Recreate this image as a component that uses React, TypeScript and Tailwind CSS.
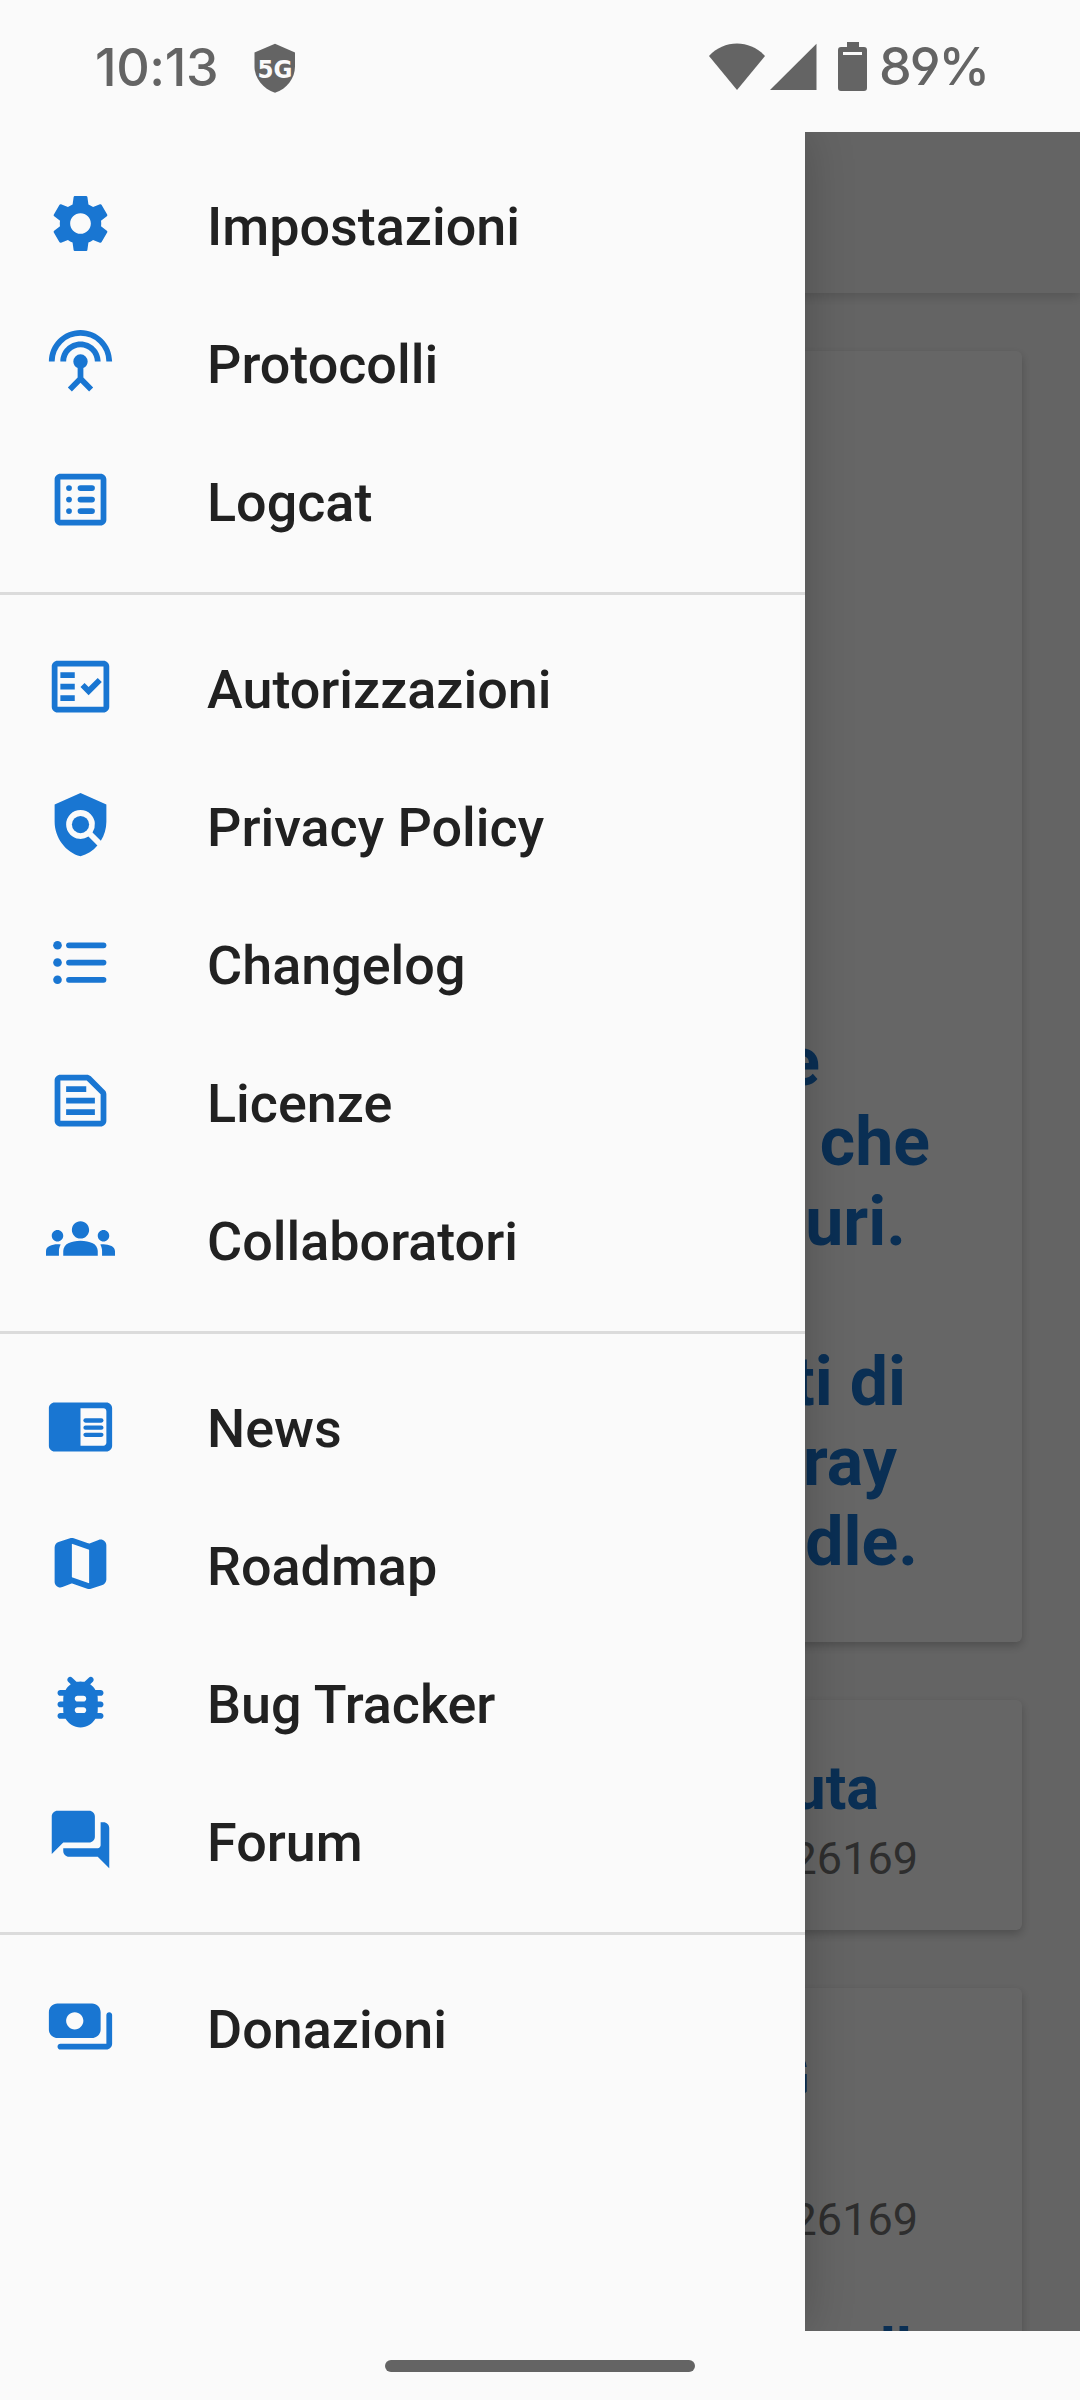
import type { ReactNode } from 'react';
import { MdSettings, MdSettingsInputAntenna, MdOutlineFactCheck, MdPolicy, MdOutlineTextSnippet, MdGroups } from 'react-icons/md';

const Svg = ({ children }: { children: ReactNode }) => (
  <svg viewBox="0 0 24 24" fill="currentColor" className="size-full">
    {children}
  </svg>
);

const LogIcon = () => (
  <Svg>
    <path d="M19 3H5c-1.1 0-2 .9-2 2v14c0 1.1.9 2 2 2h14c1.1 0 2-.9 2-2V5c0-1.1-.9-2-2-2zm0 16H5V5h14v14z" />
    {[8, 12, 16].map((y) => (
      <g key={y}>
        <circle cx="8" cy={y} r="1" />
        <rect x="11" y={y - 1} width="6" height="2" rx="1" />
      </g>
    ))}
  </Svg>
);

const ListIcon = () => (
  <Svg>
    {[6, 12, 18].map((y) => (
      <g key={y}>
        <circle cx="4" cy={y} r="1.5" />
        <rect x="7" y={y - 1} width="14" height="2" rx="1" />
      </g>
    ))}
  </Svg>
);

const NewsIcon = () => (
  <Svg>
    <path fillRule="evenodd" d="M21 4H3c-1.1 0-2 .9-2 2v13c0 1.1.9 2 2 2h18c1.1 0 2-.9 2-2V6c0-1.1-.9-2-2-2zm-1 15h-8V6h8c.55 0 1 .45 1 1v11c0 .55-.45 1-1 1z" />
    <rect x="13" y="9.5" width="7" height="1.5" rx=".75" />
    <rect x="13" y="12" width="7" height="1.5" rx=".75" />
    <rect x="13" y="14.5" width="7" height="1.5" rx=".75" />
  </Svg>
);

const MapIcon = () => (
  <Svg>
    <path d="M14.65 4.98l-5-1.75c-.42-.15-.88-.15-1.3-.01L4.36 4.56C3.55 4.84 3 5.6 3 6.46v11.85c0 1.41 1.41 2.37 2.72 1.86l2.93-1.14c.22-.09.47-.09.69-.01l5 1.75c.42.15.88.15 1.3.01l3.99-1.34c.81-.27 1.36-1.04 1.36-1.9V5.69c0-1.41-1.41-2.37-2.72-1.86l-2.93 1.14c-.22.08-.46.09-.69.01zM15 18.89l-6-2.11V5.11l6 2.11v11.67z" />
  </Svg>
);

const BugIcon = () => (
  <Svg>
    <path d="M19 8h-1.81c-.45-.78-1.07-1.45-1.82-1.96l.93-.93c.39-.39.39-1.02 0-1.41-.39-.39-1.02-.39-1.41 0l-1.47 1.47C12.96 5.06 12.49 5 12 5s-.96.06-1.41.17L9.11 3.7c-.39-.39-1.02-.39-1.41 0-.39.39-.39 1.02 0 1.41l.92.93C7.88 6.55 7.26 7.22 6.81 8H5c-.55 0-1 .45-1 1s.45 1 1 1h1.09c-.05.33-.09.66-.09 1v1H5c-.55 0-1 .45-1 1s.45 1 1 1h1v1c0 .34.04.67.09 1H5c-.55 0-1 .45-1 1s.45 1 1 1h1.81c1.04 1.79 2.97 3 5.19 3s4.15-1.21 5.19-3H19c.55 0 1-.45 1-1s-.45-1-1-1h-1.09c.05-.33.09-.66.09-1v-1h1c.55 0 1-.45 1-1s-.45-1-1-1h-1v-1c0-.34-.04-.67-.09-1H19c.55 0 1-.45 1-1s-.45-1-1-1zm-6 8h-2c-.55 0-1-.45-1-1s.45-1 1-1h2c.55 0 1 .45 1 1s-.45 1-1 1zm0-4h-2c-.55 0-1-.45-1-1s.45-1 1-1h2c.55 0 1 .45 1 1s-.45 1-1 1z" />
  </Svg>
);

const ForumIcon = () => (
  <Svg>
    <path d="M20 6h-1v8c0 .55-.45 1-1 1H6v1c0 1.1.9 2 2 2h10l4 4V8c0-1.1-.9-2-2-2zm-3 5V4c0-1.1-.9-2-2-2H4c-1.1 0-2 .9-2 2v13l4-4h9c1.1 0 2-.9 2-2z" />
  </Svg>
);

const PaymentsIcon = () => (
  <Svg>
    <path d="M19 13V7c0-1.66-1.34-3-3-3H4C2.34 4 1 5.34 1 7v6c0 1.66 1.34 3 3 3h12c1.66 0 3-1.34 3-3zm-9 0c-1.66 0-3-1.34-3-3s1.34-3 3-3 3 1.34 3 3-1.34 3-3 3zm13-5v10c0 1.1-.9 2-2 2H5c-.55 0-1-.45-1-1s.45-1 1-1h16V8c0-.55.45-1 1-1s1 .45 1 1z" />
  </Svg>
);

const groups: { label: string; icon: ReactNode }[][] = [
  [
    { label: 'Impostazioni', icon: <MdSettings className="size-full" /> },
    { label: 'Protocolli', icon: <MdSettingsInputAntenna className="size-full" /> },
    { label: 'Logcat', icon: <LogIcon /> },
  ],
  [
    { label: 'Autorizzazioni', icon: <MdOutlineFactCheck className="size-full" /> },
    { label: 'Privacy Policy', icon: <MdPolicy className="size-full" /> },
    { label: 'Changelog', icon: <ListIcon /> },
    { label: 'Licenze', icon: <MdOutlineTextSnippet className="size-full" /> },
    { label: 'Collaboratori', icon: <MdGroups className="size-full" /> },
  ],
  [
    { label: 'News', icon: <NewsIcon /> },
    { label: 'Roadmap', icon: <MapIcon /> },
    { label: 'Bug Tracker', icon: <BugIcon /> },
    { label: 'Forum', icon: <ForumIcon /> },
  ],
  [{ label: 'Donazioni', icon: <PaymentsIcon /> }],
];

function StatusBar() {
  return (
    <header className="flex h-[132px] shrink-0 items-start bg-[#fafafa] text-[#646464]">
      <span className="ml-[95px] mt-[38px] w-[123px] whitespace-nowrap font-[Inter,sans-serif] text-[52px] font-medium leading-[60px] tracking-[-0.4px]">
        10:13
      </span>
      <svg viewBox="0 0 42 50" className="ml-[36px] mt-[43px] h-[50px] w-[42px]" fill="currentColor">
        <path d="M21 .8 41 9.5v14C41 35 33 46 21 49.8 9 46 .5 35 .5 23.5v-14z" />
        <text x="3.5" y="34.500" fill="#fafafa" fontFamily="DejaVu Sans, sans-serif" fontWeight="700" fontSize="25.5" textLength="35" lengthAdjust="spacingAndGlyphs">
          5G
        </text>
      </svg>
      <div className="ml-auto mr-[94px] flex items-start">
        <svg viewBox="0 0 56 47" className="mt-[43px] h-[47px] w-[56px]" fill="currentColor">
          <path d="M28 47 0 13C7.500 5 17.500.6 28 .6S48.500 5 56 13z" />
        </svg>
        <svg viewBox="0 0 47 47" className="ml-[5px] mt-[43px] h-[47px] w-[47px]" fill="currentColor">
          <path d="M0 47 46.500.8V47z" />
        </svg>
        <svg viewBox="0 0 29 49" className="ml-[21px] mt-[42px] h-[49px] w-[29px]" fill="currentColor">
          <path fillRule="evenodd" d="M9 0h12v5h5a3 3 0 0 1 3 3v38a3 3 0 0 1-3 3H3a3 3 0 0 1-3-3V8a3 3 0 0 1 3-3h6zM5 10v3h19v-3z" />
        </svg>
        <span className="ml-[12px] mt-[37px] w-[107px] whitespace-nowrap font-[Inter,sans-serif] text-[52px] font-medium leading-[60px] tracking-[-2px] [font-feature-settings:'cv03','cv04']">
          89%
        </span>
      </div>
    </header>
  );
}

function Drawer() {
  return (
    <nav className="absolute inset-y-0 left-0 w-[805px] bg-[#fafafa] pt-[23px] shadow-[0_0_46px_rgba(0,0,0,0.22)]">
      {groups.map((items, i) => (
        <div key={i}>
          {i > 0 && <div className="my-[23px] h-[3px] bg-[#dbdbdb]" />}
          {items.map(({ label, icon }) => (
            <div key={label} className="flex h-[138px] items-start pl-[46px]">
              <span className="mt-[34px] size-[69px] text-[#1976d2]">{icon}</span>
              <span className="ml-[92px] mt-[40px] text-[53.9px] font-medium leading-[63px] text-[#212121]">{label}</span>
            </div>
          ))}
        </div>
      ))}
    </nav>
  );
}

const card = 'rounded-[6px] bg-white text-right shadow-[0_4px_10px_rgba(0,0,0,0.22)]';

function Content() {
  return (
    <div className="flex h-full flex-col">
      <div className="z-10 h-[161px] shrink-0 bg-[#fafafa] shadow-[0_4px_10px_rgba(0,0,0,0.15)]" />
      <div className="flex flex-col gap-[58px] px-[58px] pt-[58px]">
        <section className={`${card} h-[1291px] pt-[671px] text-[68px] font-bold leading-[80px] text-[#1976d2]`}>
          <p className="pr-[202px]">e</p>
          <p className="pr-[92px]">che</p>
          <p className="pr-[116px]">uri.</p>
          <p className="h-[80px]" />
          <p className="pr-[116px]">ti di</p>
          <p className="pr-[125px]">ray</p>
          <p className="pr-[104px]">dle.</p>
        </section>
        <section className={`${card} h-[230px] pt-[52px]`}>
          <p className="pr-[143px] text-[61px] font-bold leading-[72px] text-[#1976d2]">uta</p>
          <p className="mt-[8px] pr-[104px] text-[45px] leading-[53px] text-[#737373]">26169</p>
        </section>
        <section className={`${card} h-[460px] pt-[52px]`}>
          <p className="pr-[212px] text-[61px] font-bold leading-[72px] text-[#1976d2]">G</p>
          <p className="mt-[81px] pr-[104px] text-[45px] leading-[53px] text-[#737373]">26169</p>
          <p className="mt-[69px] pr-[110px] text-[61px] font-bold leading-[72px] text-[#1976d2]">ll</p>
        </section>
      </div>
    </div>
  );
}

export default function App() {
  return (
    <div className="flex h-[2400px] w-[1080px] flex-col overflow-hidden bg-[#fafafa] font-[Roboto,sans-serif]">
      <StatusBar />
      <main className="relative h-[2199px] shrink-0 overflow-hidden bg-[#fafafa]">
        <Content />
        <div className="absolute inset-0 z-20 bg-black/60">
          <Drawer />
        </div>
      </main>
      <footer className="flex h-[69px] shrink-0 justify-center pt-[29px]">
        <div className="h-[12px] w-[310px] rounded-full bg-[#646464]" />
      </footer>
    </div>
  );
}
